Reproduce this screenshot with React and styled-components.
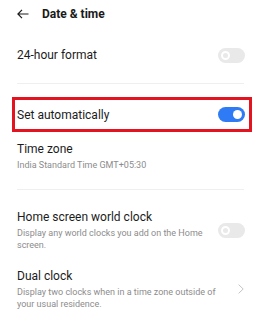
import React from 'react'
import styled, { createGlobalStyle } from 'styled-components'

const Global = createGlobalStyle`
body{
    margin: 0;
    background: #ffffff;
    font-family: Roboto, "Noto Sans", Arial, sans-serif;
    color: #1c1c1c;
}
`

const App = () =>{
    return(
        <>
            <Global/>
            <Page>
                <Header>
                    <Back>
                        <svg width="12" height="10" viewBox="0 0 12 10">
                            <path d="M11.5 5H1M5 0.8L0.9 5L5 9.2" fill="none" stroke="#1c1c1c" strokeWidth="1.2"/>
                        </svg>
                    </Back>
                    <Title>Date &amp; time</Title>
                </Header>

                <TopRow>
                    <Label>24-hour format</Label>
                    <Toggle/>
                </TopRow>
                <Divider/>

                <Highlight>
                    <Label>Set automatically</Label>
                    <Toggle on/>
                </Highlight>

                <Item top={9} bottom={18}>
                    <Text>
                        <Label>Time zone</Label>
                        <Sub>India Standard Time GMT+05:30</Sub>
                    </Text>
                </Item>
                <Divider/>

                <Item top={19} bottom={17}>
                    <Text>
                        <Label>Home screen world clock</Label>
                        <Sub>Display any world clocks you add on the Home screen.</Sub>
                    </Text>
                    <Toggle/>
                </Item>

                <Item top={0} bottom={10}>
                    <Text>
                        <Label>Dual clock</Label>
                        <Sub>Display two clocks when in a time zone outside of your usual residence.</Sub>
                    </Text>
                    <Chevron>
                        <svg width="6" height="10" viewBox="0 0 6 10">
                            <path d="M0.6 0.6L5.2 5L0.6 9.4" fill="none" stroke="#c4c4c4" strokeWidth="1"/>
                        </svg>
                    </Chevron>
                </Item>
            </Page>
        </>
    )
}

const Page = styled.div`
width: 262px;
padding: 0 17px;
box-sizing: border-box;
`

const Header = styled.div`
height: 27px;
display: flex;
align-items: center;
`

const Back = styled.div`
width: 25px;
display: flex;
align-items: center;
svg{
    display: block;
}
`

const Title = styled.div`
font-size: 12px;
font-weight: 700;
color: #1a1a1a;
`

const TopRow = styled.div`
height: 56px;
display: flex;
align-items: center;
justify-content: space-between;
`

const Divider = styled.div`
height: 1px;
background: #efefef;
margin-right: 1px;
`

const Highlight = styled.div`
margin: 13px -7px 0 -5px;
height: 29px;
border: 3px solid #e3141f;
padding: 0 4px 0 2px;
display: flex;
align-items: center;
justify-content: space-between;
`

const Item = styled.div`
display: flex;
align-items: center;
justify-content: space-between;
padding-top: ${p => p.top}px;
padding-bottom: ${p => p.bottom}px;
`

const Text = styled.div`
display: flex;
flex-direction: column;
gap: 2px;
max-width: 205px;
`

const Label = styled.div`
font-size: 12px;
line-height: 16px;
color: #1c1c1c;
`

const Sub = styled.div`
font-size: 9px;
line-height: 12px;
color: #8c8c8c;
`

const Toggle = styled.div`
flex: none;
width: 27px;
height: 15px;
border-radius: 8px;
background: ${p => p.on ? '#2f7bf5' : '#e9e9e9'};
position: relative;
&::after{
    content: '';
    position: absolute;
    top: 3px;
    ${p => p.on ? 'right: 3px;' : 'left: 3px;'}
    width: 9px;
    height: 9px;
    border-radius: 50%;
    box-sizing: border-box;
    ${p => p.on ? 'background: #ffffff;' : 'border: 2px solid #ffffff;'}
}
`

const Chevron = styled.div`
flex: none;
width: 6px;
margin-right: 1px;
display: flex;
svg{
    display: block;
}
`

export default App
